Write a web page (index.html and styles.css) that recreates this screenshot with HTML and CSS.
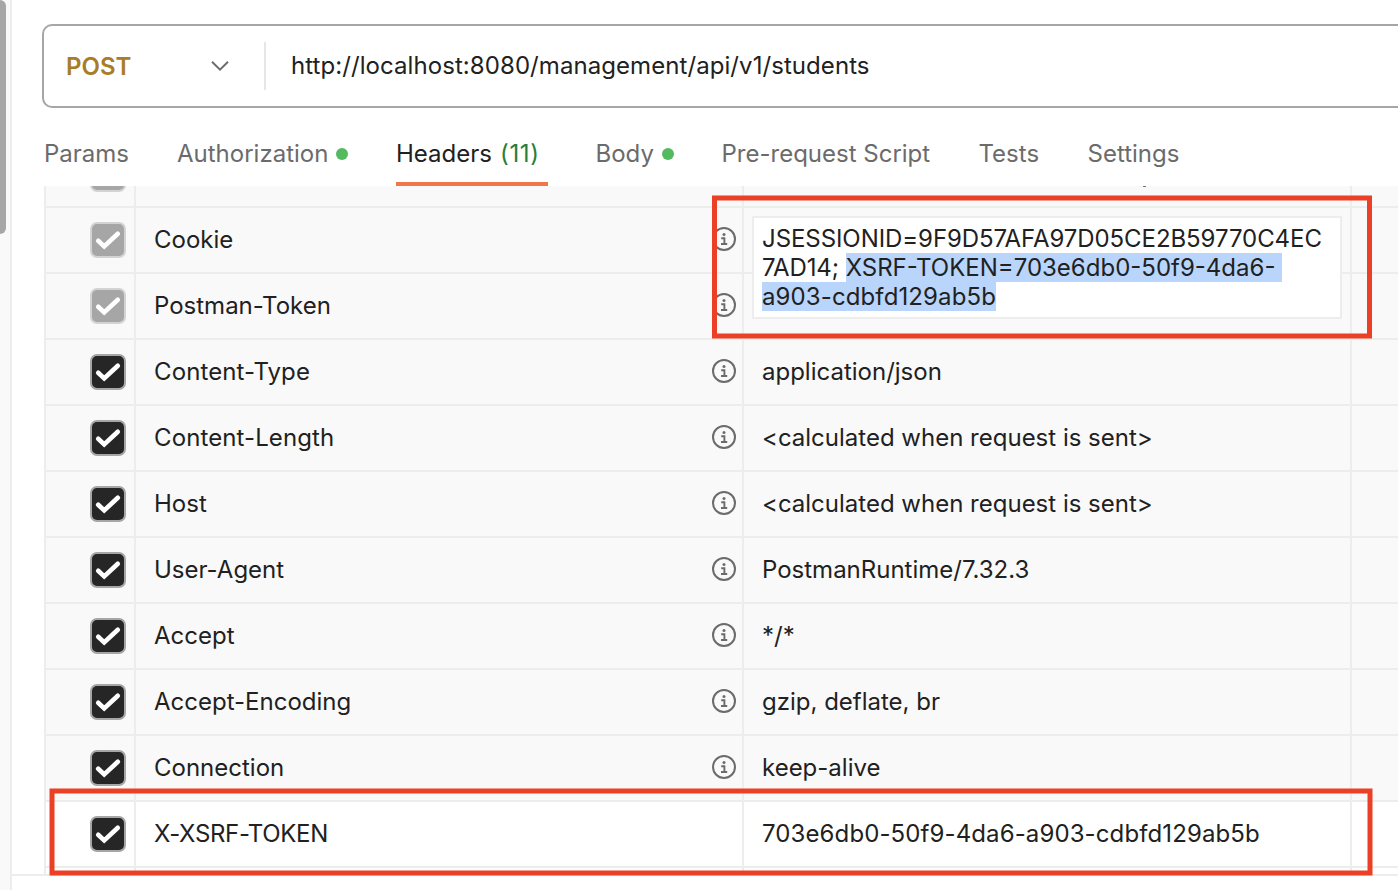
FILE: index.html
```
<!DOCTYPE html>
<html lang="en">
<head>
<meta charset="utf-8">
<title>Request headers</title>
<link rel="stylesheet" href="styles.css">
</head>
<body>
<svg class="defs" width="0" height="0">
  <symbol id="check" viewBox="0 0 36 36"><path d="M8.2 18.8L14.2 24.4L27.8 11.8" fill="none" stroke="currentColor" stroke-width="4.6" stroke-linecap="round" stroke-linejoin="miter"/></symbol>
  <symbol id="info" viewBox="0 0 24 24"><circle cx="12" cy="12" r="11" fill="none" stroke="currentColor" stroke-width="2"/><circle cx="12" cy="7.4" r="1.5" fill="currentColor"/><path d="M9.2 11.2H12.4V17M9 17H15.2" fill="none" stroke="currentColor" stroke-width="1.9"/></symbol>
</svg>
<div class="app">
  <aside class="sidebar"><div class="thumb"></div></aside>
  <main class="main">
    <div class="urlbar">
      <div class="method"><span>POST</span><svg class="chevron" width="20" height="12" viewBox="0 0 20 12"><path d="M2 1.8L10 9.6L18 1.8" fill="none" stroke="#6b6b6b" stroke-width="1.9"/></svg></div>
      <div class="url">http://localhost:8080/management/api/v1/students</div>
    </div>
    <nav class="tabs">
      <div class="tab params"><span>Params</span></div>
      <div class="tab auth"><span>Authorization</span><i class="dot"></i></div>
      <div class="tab active"><span>Headers</span><span class="count">(11)</span></div>
      <div class="tab body"><span>Body</span><i class="dot"></i></div>
      <div class="tab script"><span>Pre-request Script</span></div>
      <div class="tab tests"><span>Tests</span></div>
      <div class="tab settings"><span>Settings</span></div>
    </nav>
    <div class="table">
      <div class="row partial"><div class="cell c1"><span class="box off"><svg><use href="#check"/></svg></span></div><div class="cell c2"></div><div class="cell c3"><i class="tail"></i></div><div class="cell"></div></div>
      <div class="row"><div class="cell c1"><span class="box off"><svg><use href="#check"/></svg></span></div><div class="cell c2"><span>Cookie</span><svg class="info"><use href="#info"/></svg></div><div class="cell c3"><div class="editor"><div class="caps">JSESSIONID=9F9D57AFA97D05CE2B59770C4EC</div><div class="caps">7AD14; <mark class="wide">XSRF-TOKEN=703e6db0-50f9-4da6-</mark></div><div class="token"><mark>a903-cdbfd129ab5b</mark></div></div></div><div class="cell"></div></div>
      <div class="row"><div class="cell c1"><span class="box off"><svg><use href="#check"/></svg></span></div><div class="cell c2"><span>Postman-Token</span><svg class="info"><use href="#info"/></svg></div><div class="cell c3"></div><div class="cell"></div></div>
      <div class="row"><div class="cell c1"><span class="box"><svg><use href="#check"/></svg></span></div><div class="cell c2"><span class="token">Content-Type</span><svg class="info"><use href="#info"/></svg></div><div class="cell c3"><span>application/json</span></div><div class="cell"></div></div>
      <div class="row"><div class="cell c1"><span class="box"><svg><use href="#check"/></svg></span></div><div class="cell c2"><span class="token">Content-Length</span><svg class="info"><use href="#info"/></svg></div><div class="cell c3"><span>&lt;calculated when request is sent&gt;</span></div><div class="cell"></div></div>
      <div class="row"><div class="cell c1"><span class="box"><svg><use href="#check"/></svg></span></div><div class="cell c2"><span>Host</span><svg class="info"><use href="#info"/></svg></div><div class="cell c3"><span>&lt;calculated when request is sent&gt;</span></div><div class="cell"></div></div>
      <div class="row"><div class="cell c1"><span class="box"><svg><use href="#check"/></svg></span></div><div class="cell c2"><span>User-Agent</span><svg class="info"><use href="#info"/></svg></div><div class="cell c3"><span>PostmanRuntime/7.32.3</span></div><div class="cell"></div></div>
      <div class="row"><div class="cell c1"><span class="box"><svg><use href="#check"/></svg></span></div><div class="cell c2"><span>Accept</span><svg class="info"><use href="#info"/></svg></div><div class="cell c3"><span>*/*</span></div><div class="cell"></div></div>
      <div class="row"><div class="cell c1"><span class="box"><svg><use href="#check"/></svg></span></div><div class="cell c2"><span>Accept-Encoding</span><svg class="info"><use href="#info"/></svg></div><div class="cell c3"><span>gzip, deflate, br</span></div><div class="cell"></div></div>
      <div class="row"><div class="cell c1"><span class="box"><svg><use href="#check"/></svg></span></div><div class="cell c2"><span>Connection</span><svg class="info"><use href="#info"/></svg></div><div class="cell c3"><span>keep-alive</span></div><div class="cell"></div></div>
      <div class="row custom"><div class="cell c1"><span class="box"><svg><use href="#check"/></svg></span></div><div class="cell c2"><span class="header-name">X-XSRF-TOKEN</span></div><div class="cell c3"><span class="token">703e6db0-50f9-4da6-a903-cdbfd129ab5b</span></div><div class="cell"></div></div>
      <div class="row custom last"><div class="cell c1"></div><div class="cell c2"></div><div class="cell c3"></div><div class="cell"></div></div>
    </div>
    <div class="response"></div>
  </main>
  <svg class="callouts" width="1398" height="890" viewBox="0 0 1398 890">
    <rect x="714.5" y="198" width="655" height="138"/>
    <rect x="52" y="791" width="1318" height="82"/>
  </svg>
</div>
</body>
</html>
```
FILE: styles.css
```
* { box-sizing: border-box; }
body { margin: 0; background: #fff; color: #212121; font: 24px/32px Inter, "Liberation Sans", sans-serif; letter-spacing: 0; overflow: hidden; }
.defs { position: absolute; }
.app { position: relative; display: flex; width: 1398px; height: 890px; overflow: hidden; }
.sidebar { flex: none; width: 12px; background: #f9f9f9; border-right: 2px solid #ededed; }
.thumb { width: 6px; height: 234px; background: #a6a6a6; border-radius: 0 6px 6px 0; }
.main { flex: 1; min-width: 0; display: flex; flex-direction: column; padding-top: 24px; }
.urlbar { flex: none; display: flex; align-items: center; width: 1400px; height: 84px; margin-left: 30px; border: 2px solid #a6a6a6; border-radius: 10px; }
.method { display: flex; align-items: center; justify-content: space-between; width: 222px; height: 48px; padding: 0 34px 0 22px; border-right: 2px solid #e6e6e6; color: #a87d26; font-weight: 600; }
.method span { padding-top: 2px; }
.url { padding-left: 25px; white-space: pre; letter-spacing: 0.07px; }
.tabs { flex: none; display: flex; height: 78px; padding-left: 32px; color: #6b6b6b; white-space: nowrap; }
.tab { display: flex; align-items: center; flex: none; height: 78px; padding-top: 14px; }
.params { width: 133px; }
.auth { width: 219px; }
.active { width: 152px; margin-right: 47.5px; color: #212121; gap: 8px; padding-top: 18px; border-bottom: 4px solid #f0774a; }
.count { color: #2a7d35; letter-spacing: 0.7px; }
.body { width: 126px; }
.script { width: 257px; }
.tests { width: 109px; }
.dot { width: 12px; height: 12px; margin-left: 8px; border-radius: 50%; background: #55b95d; }
.table { flex: none; height: 688px; margin-left: 32px; border-left: 2px solid #ededed; background: #f9f9f9; overflow: hidden; }
.row { display: grid; grid-template-columns: 90px 608px 608px 1fr; height: 66px; border-bottom: 2px solid #ededed; }
.partial { grid-template-rows: 20px; height: 22px; overflow: hidden; align-items: end; }
.partial .cell { height: 64px; }
.partial .box { margin-top: 0; }
.custom { background: #fff; }
.last { border-bottom: 0; }
.cell { display: flex; align-items: center; position: relative; border-right: 2px solid #ededed; white-space: pre; }
.cell:last-child { border-right: 0; }
.c1 { padding-left: 44px; }
.c2 { justify-content: space-between; padding: 0 6px 0 18px; }
.c3 { padding-left: 18px; }
.box { width: 36px; height: 36px; border: 2px solid #a6a6a6; border-radius: 7px; background: #262626; color: #fff; }
.box svg { display: block; width: 36px; height: 36px; margin: -2px; }
.off { background: #a6a6a6; border-color: #d3d3d3; }
.info { width: 24px; height: 24px; margin-top: -2px; margin-left: auto; color: #6b6b6b; }
.token { letter-spacing: 0.11px; }
.caps { letter-spacing: -0.07px; }
.header-name { letter-spacing: -0.34px; }
.editor { position: absolute; z-index: 1; left: 8px; top: 8px; width: 590px; height: 103px; padding: 6px 8px; border: 2px solid #ededed; background: #fff; line-height: 29px; }
mark { display: inline-block; height: 29px; background: #b9d5fb; color: inherit; }
.wide { padding-right: 7px; letter-spacing: 0; }
.tail { position: absolute; top: 44px; left: 399px; width: 3px; height: 1px; background: #777; }
.response { flex: 1; border-top: 2px solid #ededed; }
.callouts { position: absolute; left: 0; top: 0; z-index: 2; fill: none; stroke: #eb4025; stroke-width: 5; }
```
